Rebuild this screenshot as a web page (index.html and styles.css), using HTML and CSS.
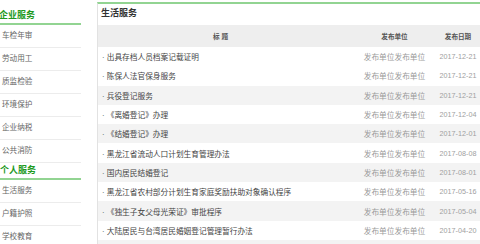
FILE: index.html
```html
<!DOCTYPE html>
<html lang="zh-CN">
<head>
    <meta charset="UTF-8">
    <title>生活服务</title>
    <link rel="stylesheet" href="styles.css">
</head>
<body>
    <div class="layout">
        <div class="sidebar">
            <h3 class="side-title">企业服务</h3>
            <ul class="side-list">
                <li>车检年审</li>
                <li>劳动用工</li>
                <li>质监检验</li>
                <li>环境保护</li>
                <li>企业纳税</li>
                <li>公共消防</li>
            </ul>
            <h3 class="side-title">个人服务</h3>
            <ul class="side-list">
                <li>生活服务</li>
                <li>户籍护照</li>
                <li>学校教育</li>
            </ul>
        </div>

        <div class="main">
            <h2 class="main-title">生活服务</h2>
            <table class="news">
                <tr>
                    <th class="col-title">标 题</th>
                    <th class="col-unit">发布单位</th>
                    <th class="col-date">发布日期</th>
                </tr>
                <tr>
                    <td class="col-title">· 出具存档人员档案记载证明</td>
                    <td class="col-unit">发布单位发布单位</td>
                    <td class="col-date">2017-12-21</td>
                </tr>
                <tr>
                    <td class="col-title">· 陈保人法官保身服务</td>
                    <td class="col-unit">发布单位发布单位</td>
                    <td class="col-date">2017-12-21</td>
                </tr>
                <tr class="alt">
                    <td class="col-title">· 兵役登记服务</td>
                    <td class="col-unit">发布单位发布单位</td>
                    <td class="col-date">2017-12-21</td>
                </tr>
                <tr>
                    <td class="col-title">· 《离婚登记》办理</td>
                    <td class="col-unit">发布单位发布单位</td>
                    <td class="col-date">2017-12-04</td>
                </tr>
                <tr class="alt">
                    <td class="col-title">· 《结婚登记》办理</td>
                    <td class="col-unit">发布单位发布单位</td>
                    <td class="col-date">2017-12-01</td>
                </tr>
                <tr>
                    <td class="col-title">· 黑龙江省流动人口计划生育管理办法</td>
                    <td class="col-unit">发布单位发布单位</td>
                    <td class="col-date">2017-08-08</td>
                </tr>
                <tr class="alt">
                    <td class="col-title">· 国内居民结婚登记</td>
                    <td class="col-unit">发布单位发布单位</td>
                    <td class="col-date">2017-08-01</td>
                </tr>
                <tr>
                    <td class="col-title">· 黑龙江省农村部分计划生育家庭奖励扶助对象确认程序</td>
                    <td class="col-unit">发布单位发布单位</td>
                    <td class="col-date">2017-05-16</td>
                </tr>
                <tr class="alt">
                    <td class="col-title">· 《独生子女父母光荣证》审批程序</td>
                    <td class="col-unit">发布单位发布单位</td>
                    <td class="col-date">2017-05-04</td>
                </tr>
                <tr>
                    <td class="col-title">· 大陆居民与台湾居民婚姻登记管理暂行办法</td>
                    <td class="col-unit">发布单位发布单位</td>
                    <td class="col-date">2017-04-20</td>
                </tr>
                <tr class="alt">
                    <td class="col-title"></td>
                    <td class="col-unit"></td>
                    <td class="col-date"></td>
                </tr>
            </table>
        </div>
    </div>
</body>
</html>
```

FILE: styles.css
```css
html, body {
    overflow: hidden;
}
body {
    margin: 0;
    font-family: "Liberation Sans", "Noto Sans CJK SC", sans-serif;
    color: #444;
    background: #fff;
}
.layout {
    display: flex;
    align-items: flex-start;
}
.sidebar {
    width: 81px;
    flex: 0 0 81px;
    padding-top: 8px;
    margin-right: 16px;
}
.side-title {
    margin: 0;
    height: 15px;
    line-height: 15px;
    font-size: 9px;
    font-weight: bold;
    color: #1f9a1f;
    border-bottom: 2px solid #92d492;
}
.sidebar .side-title:first-child {
    text-indent: -1px;
}
.side-list {
    list-style: none;
    margin: 0;
    padding: 0;
}
.side-list li {
    height: 22px;
    line-height: 22px;
    padding-left: 2px;
    font-size: 7.6px;
    color: #666;
    border-bottom: 1px solid #ececec;
}
.main {
    flex: 1;
    margin-top: 2px;
    border-top: 2px solid #92d492;
    border-left: 1px solid #e2e2e2;
}
.main-title {
    margin: 0;
    height: 21px;
    line-height: 19px;
    padding-left: 3px;
    font-size: 9px;
    font-weight: bold;
    color: #333;
}
.news {
    width: 100%;
    border-collapse: collapse;
    table-layout: fixed;
}
.news th {
    height: 22px;
    padding: 0;
    background: #eeeeee;
    font-size: 6.6px;
    font-weight: bold;
    color: #555;
    text-align: center;
}
.news td {
    height: 19.3px;
    padding: 0;
    font-size: 7.7px;
    white-space: nowrap;
    overflow: visible;
}
.news tr.alt td {
    background: #f3f3f3;
}
.news .col-title {
    width: 245px;
}
.news td.col-title {
    padding-left: 4px;
    color: #444;
}
.news .col-unit {
    width: 83px;
    padding-left: 10px;
}
.news td.col-unit {
    text-align: center;
    color: #9a9a9a;
}
.news .col-date {
    text-align: center;
}
.news td.col-date {
    color: #a0a0a0;
    font-size: 7.2px;
}
```
